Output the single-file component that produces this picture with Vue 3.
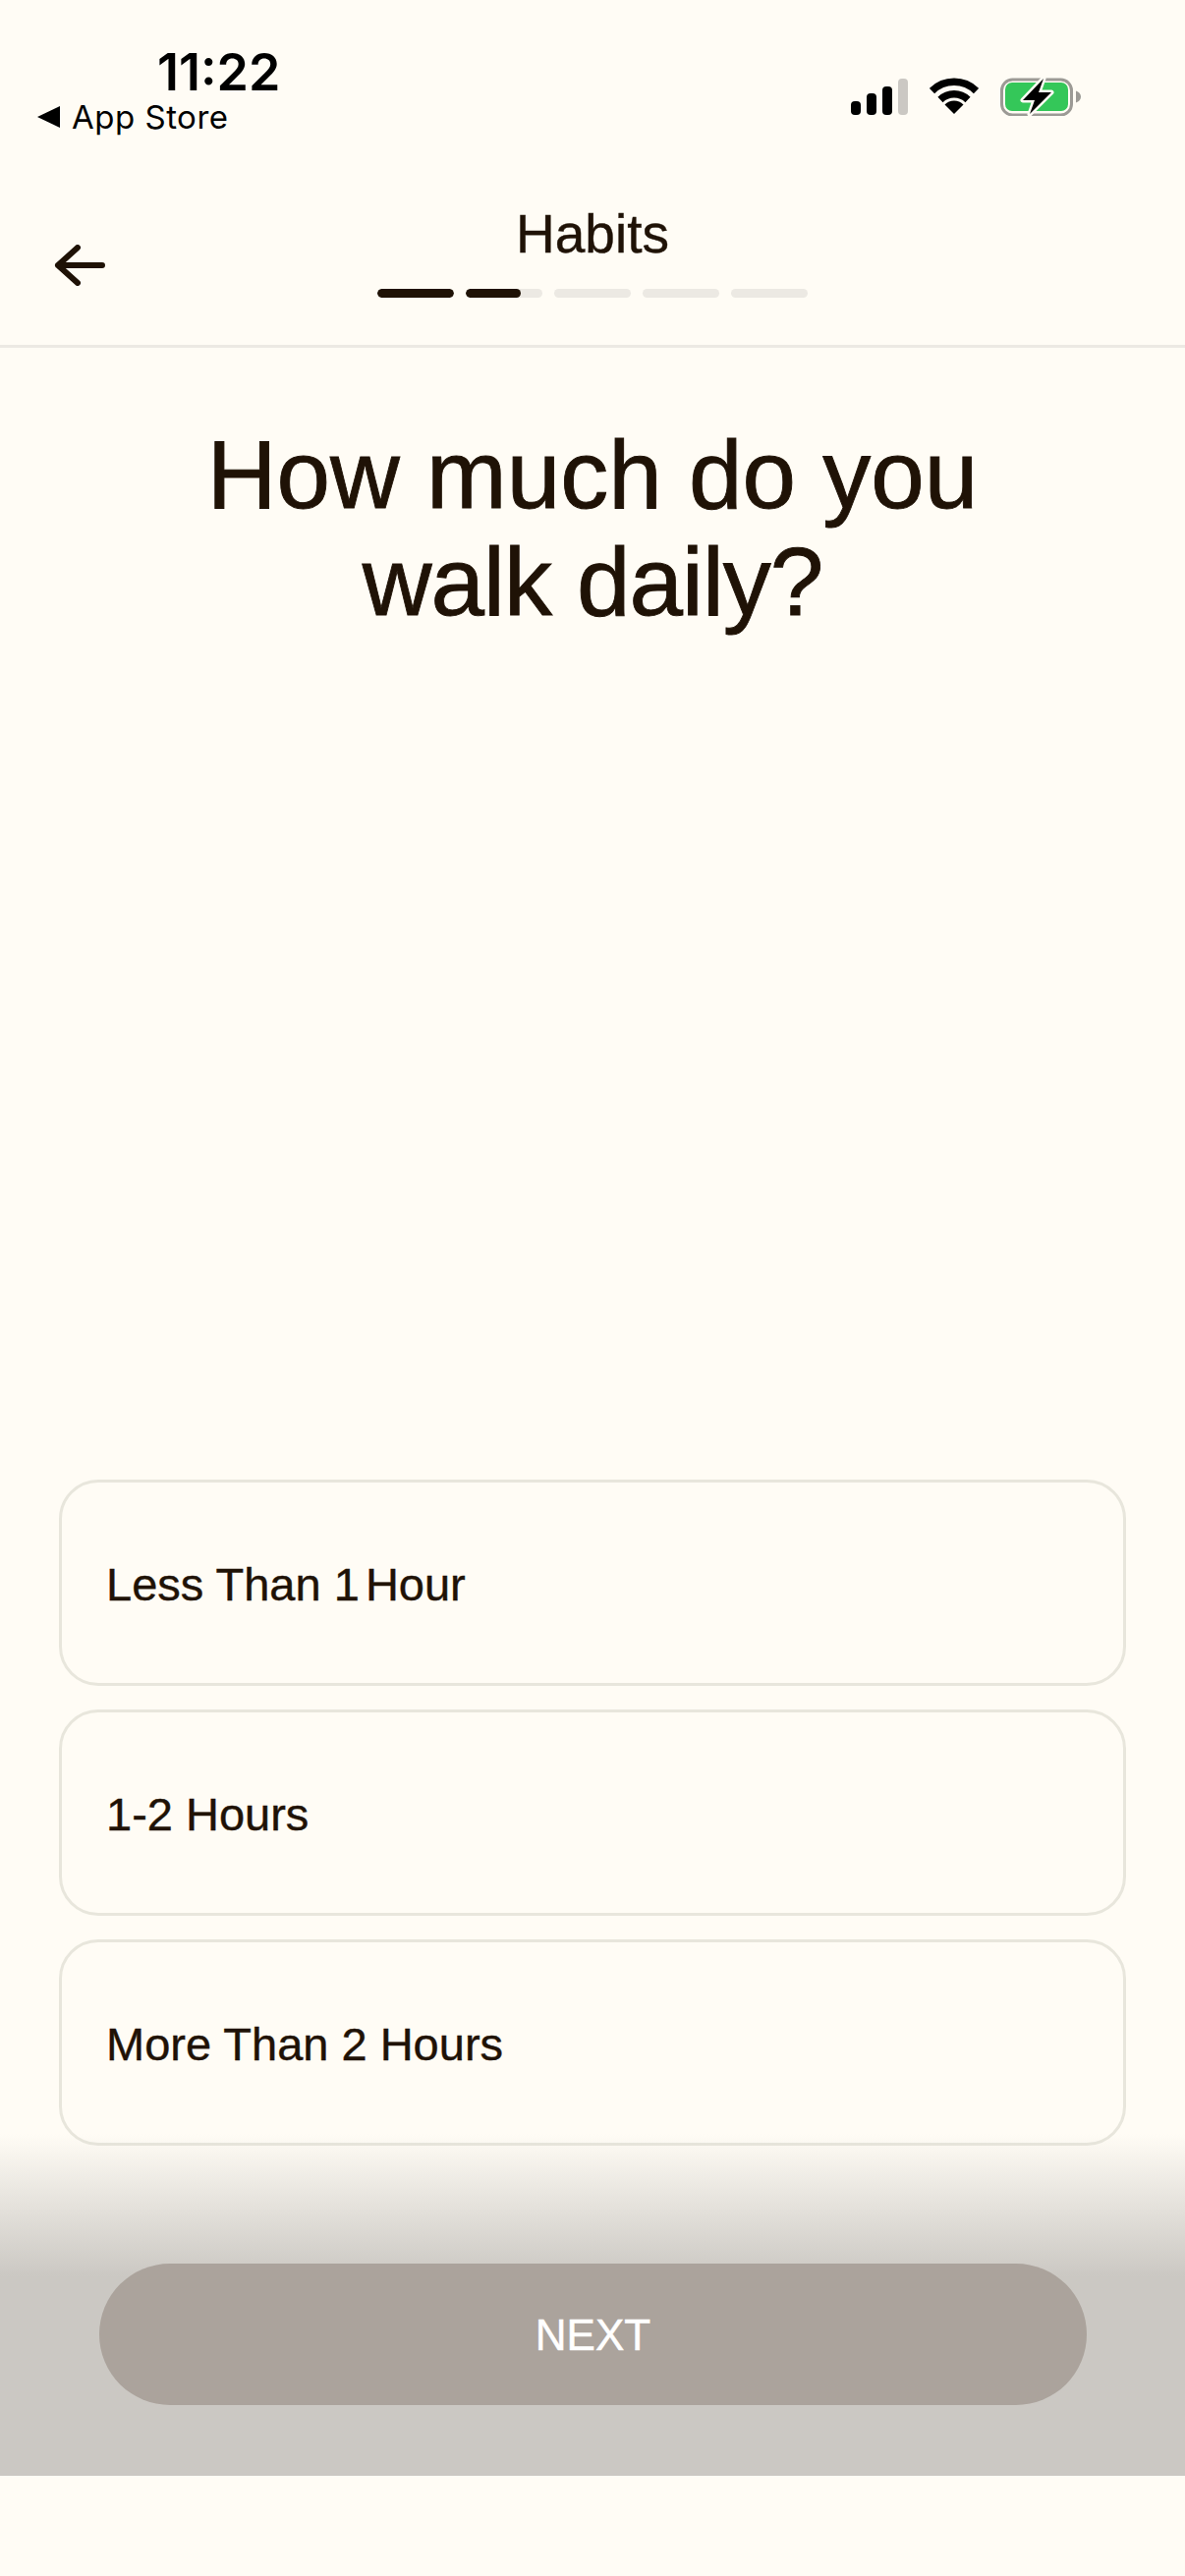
<script setup>
// Split around "1" so the narrow numeral of the original typeface can be imitated
const options = [
  ['Less Than ', '1', ' Hour'],
  ['1-2 Hours', '', ''],
  ['More Than 2 Hours', '', ''],
]
const steps = [100, 72, 0, 0, 0]
</script>

<template>
  <div class="page">
    <!-- iOS status bar -->
    <div class="statusbar">
      <div class="status-left">
        <span class="time">11:22</span>
        <span class="back-app"><i class="tri"></i>App Store</span>
      </div>
      <div class="status-right">
        <svg width="58" height="37" viewBox="0 0 58 37">
          <rect x="0" y="23" width="10" height="14" rx="4" fill="#000" />
          <rect x="16" y="15" width="10" height="22" rx="4" fill="#000" />
          <rect x="32" y="8" width="10" height="29" rx="4" fill="#000" />
          <rect x="48" y="0" width="10" height="37" rx="4" fill="#cbc8c3" />
        </svg>
        <svg width="50" height="38" viewBox="0 0 50 38">
          <path d="M2.5 13.5A32 32 0 0 1 47.5 13.5" fill="none" stroke="#000" stroke-width="7.4" />
          <path d="M11 22.5A20 20 0 0 1 39 22.5" fill="none" stroke="#000" stroke-width="7.4" />
          <path d="M25 37L15.5 27.5A13.4 13.4 0 0 1 34.5 27.5Z" fill="#000" />
        </svg>
        <svg width="82" height="40" viewBox="0 0 82 40">
          <rect x="1.5" y="3" width="71" height="36" rx="11" fill="none" stroke="#9c9a95" stroke-width="3" />
          <rect x="5" y="6" width="64" height="29" rx="7" fill="#34c759" />
          <path d="M77 14.5C80 15.5 82 17.5 82 20.5C82 23.5 80 25.5 77 26.5Z" fill="#9c9a95" />
          <path d="M44 2L23 24H35L30 38L52 16H39Z" fill="#000" stroke="#fffcf5" stroke-width="5" stroke-linejoin="round" paint-order="stroke" />
        </svg>
      </div>
    </div>

    <!-- Screen header with step progress -->
    <header class="topbar">
      <button class="back" aria-label="Back">
        <svg width="52" height="42" viewBox="0 0 52 42">
          <path d="M49 21H4M24 3L4 21L24 39" fill="none" stroke="#1f1206" stroke-width="6" stroke-linecap="round" stroke-linejoin="round" />
        </svg>
      </button>
      <div class="topbar-center">
        <div class="topbar-title">Habits</div>
        <div class="progress">
          <div v-for="(pct, i) in steps" :key="i" class="track">
            <div class="fill" :style="{ width: pct + '%' }"></div>
          </div>
        </div>
      </div>
    </header>

    <main class="content">
      <h1 class="question">How much do you<br /><span class="tight">walk daily?</span></h1>
      <div class="options">
        <div v-for="opt in options" :key="opt.join('')" class="option">
          <span>{{ opt[0] }}<span class="one">{{ opt[1] }}</span>{{ opt[2] }}</span>
        </div>
      </div>
    </main>

    <!-- Fades over the last card -->
    <footer class="action">
      <button class="next">NEXT</button>
    </footer>
  </div>
</template>

<style scoped>
.page {
  width: 1206px;
  height: 2622px;
  display: flex;
  flex-direction: column;
  background: #fffcf5;
  color: #1f1206;
  font-family: "Liberation Sans", Arial, sans-serif;
  overflow: hidden;
}

.statusbar {
  height: 190px;
  flex-shrink: 0;
  display: flex;
  justify-content: space-between;
  align-items: flex-start;
  padding: 45px 106px 0 38px;
  box-sizing: border-box;
  font-family: Inter, sans-serif;
  color: #000;
}
.status-left {
  display: flex;
  flex-direction: column;
  align-items: flex-start;
}
.time {
  margin-left: 122px;
  font-size: 52px;
  line-height: 58px;
  font-weight: 600;
}
.back-app {
  display: flex;
  align-items: center;
  gap: 12px;
  margin-top: -4px;
  font-size: 33px;
  line-height: 40px;
  letter-spacing: 0.5px;
}
.tri {
  width: 0;
  height: 0;
  border-top: 11px solid transparent;
  border-bottom: 11px solid transparent;
  border-right: 23px solid #000;
}
.status-right {
  display: flex;
  align-items: center;
  gap: 22px;
  margin-top: 33px;
}

.topbar {
  height: 164px;
  flex-shrink: 0;
  box-sizing: border-box;
  display: grid;
  grid-template-columns: 1fr 438px 1fr;
  border-bottom: 3px solid #ece9e3;
}
.back {
  justify-self: start;
  align-self: start;
  margin: 59px 0 0 55px;
  padding: 0;
  border: 0;
  background: none;
  line-height: 0;
}
.topbar-center {
  display: flex;
  flex-direction: column;
  align-items: center;
}
.topbar-title {
  margin-top: 17px;
  font-size: 55px;
  line-height: 62px;
  -webkit-text-stroke: 0.4px #1f1206;
}
.progress {
  width: 100%;
  display: flex;
  gap: 12px;
  margin-top: 25px;
}
.track {
  flex: 1;
  height: 9px;
  border-radius: 5px;
  background: #ece9e3;
  overflow: hidden;
}
.fill {
  height: 100%;
  border-radius: 5px;
  background: #1f1206;
}

.content {
  flex: 1;
  min-height: 0;
  display: flex;
  flex-direction: column;
  padding: 0 60px;
}
.question {
  margin: 75px 0 0;
  text-align: center;
  font-size: 98px;
  line-height: 109px;
  font-weight: 400;
  -webkit-text-stroke: 0.9px #1f1206;
}
.tight {
  letter-spacing: -1px;
}
.options {
  margin-top: auto;
  display: flex;
  flex-direction: column;
  gap: 24px;
}
.option {
  height: 210px;
  box-sizing: border-box;
  display: flex;
  align-items: center;
  padding: 3px 0 0 45px;
  border: 3px solid #e8e6dc;
  border-radius: 40px;
  font-size: 47px;
  white-space: nowrap;
  -webkit-text-stroke: 0.4px #1f1206;
}
.one {
  letter-spacing: -7px;
}

.action {
  position: relative;
  height: 348px;
  margin-top: -12px;
  margin-bottom: 102px;
  flex-shrink: 0;
  box-sizing: border-box;
  padding: 132px 100px 0 101px;
  background: linear-gradient(to bottom, rgba(203, 200, 195, 0) 0, #cbc8c3 145px);
}
.next {
  display: block;
  width: 100%;
  height: 144px;
  padding: 2px 0 0;
  border: 0;
  border-radius: 72px;
  background: #aba39c;
  color: #fff;
  font-family: "Liberation Sans", Arial, sans-serif;
  font-size: 44px;
  -webkit-text-stroke: 0.5px #fff;
}
</style>
